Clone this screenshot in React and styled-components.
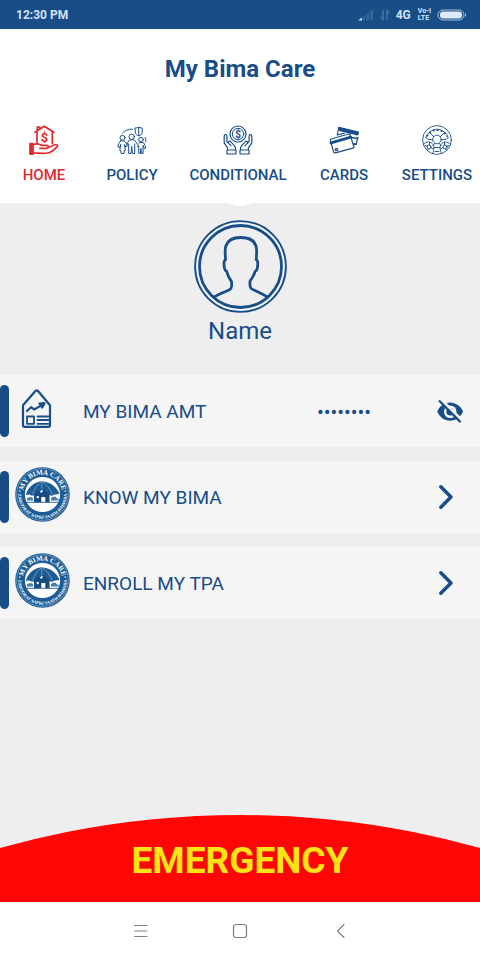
import React from 'react'
import styled, { createGlobalStyle } from 'styled-components'

const blue = '#184d88'

const GlobalStyle = createGlobalStyle`
    * { box-sizing: border-box; }
    body {
        margin: 0;
        background: #eeeeee;
        color: ${blue};
        font-family: Roboto, sans-serif;
    }
    button {
        margin: 0;
        padding: 0;
        border: 0;
        background: none;
        color: inherit;
        font: inherit;
        cursor: pointer;
    }
    svg { display: block; flex: none; }
`
const Screen = styled.div`
    display: flex;
    flex-direction: column;
    min-height: 100vh;
`
const StatusBar = styled.div`
    display: flex;
    align-items: center;
    height: 29px;
    padding: 0 13px 0 16px;
    background: ${blue};
    color: #d3e3f8;
    font-size: 12px;
    font-weight: 700;
`
const StatusIcons = styled.div`
    display: flex;
    align-items: center;
    gap: 6px;
    margin-left: auto;
`
const Volte = styled.span`
    display: flex;
    flex-direction: column;
    margin-left: 1px;
    font-size: 7px;
    line-height: 7px;
`
const Header = styled.header`
    background: #ffffff;
    overflow: hidden;
`
const Title = styled.h1`
    margin: 0;
    padding-top: 24px;
    font-size: 24px;
    line-height: 32px;
    font-weight: 700;
    text-align: center;
`
const Tabs = styled.nav`
    display: grid;
    grid-template-columns: 88fr 88fr 124fr 88fr 98fr;
    width: calc(100% + 6px);
    height: 118px;
    padding-top: 40px;
`
const Tab = styled.a`
    display: flex;
    flex-direction: column;
    align-items: center;
    gap: 10px;
    color: ${props => (props.$active ? '#e02a30' : blue)};
    font-size: 15px;
    line-height: 20px;
    font-weight: 500;
    text-decoration: none;
`
const Profile = styled.section`
    display: flex;
    flex-direction: column;
    align-items: center;
    padding-bottom: 26px;
    font-size: 24px;
    line-height: 36px;
`
const Notch = styled.svg`
    margin-bottom: 13px;
`
const List = styled.main`
    display: flex;
    flex-direction: column;
    flex: 1;
    gap: 14px;
    padding-bottom: 24px;
`
const Row = styled.div`
    display: flex;
    align-items: center;
    height: 72px;
    background: #f5f5f5;
    font-size: 19px;
    line-height: 24px;
`
const Marker = styled.span`
    width: 9px;
    height: 52px;
    border-radius: 5px;
    background: ${blue};
`
const RowIcon = styled.span`
    width: 74px;
    padding: 0 0 6px 6px;
`
const RowLabel = styled.span`
    flex: 1;
    padding-top: 2px;
`
const Amount = styled.span`
    padding-top: 2px;
    font-size: 20px;
`
const RowAction = styled.button`
    display: flex;
    justify-content: flex-end;
    width: 109px;
    padding-right: 16px;
`
const Emergency = styled.button`
    height: 87px;
    padding-top: 3px;
    background: #ff0606;
    color: #fbe416;
    font-size: 37px;
    font-weight: 700;
    clip-path: ellipse(185% 889px at 50% 889px);
`
const SystemNav = styled.div`
    display: flex;
    justify-content: center;
    align-items: center;
    gap: 80px;
    height: 58px;
    background: #ffffff;
    color: #808080;
`
const BottomArea = styled.footer`
    display: flex;
    flex-direction: column;
`

const Line = ({ width = 30, height = 30, stroke = 1, children }) => (
    <svg
        width={width}
        height={height}
        viewBox={`0 0 ${width} ${height}`}
        fill="none"
        stroke="currentColor"
        strokeWidth={stroke}
        strokeLinecap="round"
        strokeLinejoin="round"
        aria-hidden="true"
    >
        {children}
    </svg>
)

const HomeIcon = () => (
    <Line stroke={1.7}>
        <path d="M6 7.2 15.3 1.3l9.5 5.9M8.3 5V2h2.4v1.6M8 7v10.5M23.3 7v11.5" />
        <text x="15.4" y="17" textAnchor="middle" fontSize="13" fontWeight="700" fill="currentColor" stroke="none">$</text>
        <path d="M1 18.5h3v10.6H1z" fill="currentColor" />
        <path d="M4.8 19.6c4-1.8 5.6-.2 8 .7h4.6c2.6 0 2.6 3 0 3H11M18.8 22.6c3.4-.4 5.8-3.3 8.4-3.1 1.5.2 1.8 1.4.8 2.4-2.6 2.8-5 5.4-9 6.1-4.8.8-9.4 0-14.2 0" />
    </Line>
)

const FamilyIcon = () => (
    <Line stroke={1}>
        <circle cx="5.5" cy="12.8" r="2.5" />
        <circle cx="14.7" cy="11.8" r="2.7" />
        <circle cx="24" cy="14.6" r="2.3" />
        <path d="M18.3 3c1.5 0 2.3-.3 3.4-.9 1 .6 2 .9 3.5.9v4.5c0 1.6-1.5 2.7-3.5 3.4-2-.7-3.4-1.8-3.4-3.4zM21.7 2.5v8" />
        <path d="M5.5 8C8 5.4 11 4.1 15.5 4.1M28.2 12.3c.8 1.6.8 3 .4 4.6" />
        <path d="M3.5 16.1c-1.6.7-2.2 3.6-2.6 5.8l1.8.7 1-3.2-.9 6.3h1l.3 2.7h2.9l.4-2.7h1l-1-6.2 1.4 2.5 1.9-1.4-2.5-4c-1.3-1-3.2-1-4.7-.5z" />
        <path d="m9.8 19.8 1.9-4.3c1.4-1.1 4.7-1.1 6.2 0l3 4.3M11.7 19v9.4h2.4l.6-7 .6 7h2.4V19" />
        <path d="M21.8 18c1.1-.8 3.7-.8 5 0 1 1.6 1.6 3.2 2.1 5l-1.6.6-1.2-3.2v8h-1.7l-.5-5-.5 5h-1.7v-8l-1.3 1.2" />
    </Line>
)

const HandsCoinIcon = () => (
    <Line stroke={1.2}>
        <circle cx="15" cy="9" r="8" />
        <circle cx="15" cy="9" r="5.7" strokeWidth="1" />
        <text x="15" y="12.6" textAnchor="middle" fontSize="10" fontWeight="700" fill="currentColor" stroke="none">$</text>
        <path d="M4.6 25v-2.2l-3.4-5V11c0-1.9 2.7-1.9 2.7 0v5.6l4 4.1M5.6 18.4c-1-1.5.8-2.9 2-1.7l4 4.2c1 1.2 1 2.5 1 4.1M4 25h9v4H4z" />
        <path d="M25.4 25v-2.2l3.4-5V11c0-1.9-2.7-1.9-2.7 0v5.6l-4 4.1M24.4 18.4c1-1.5-.8-2.9-2-1.7l-4 4.2c-1 1.2-1 2.5-1 4.1M17 25h9v4h-9z" />
    </Line>
)

const CardsIcon = () => (
    <Line stroke={1.2}>
        <path d="m9.7 2.3 19.7 4.8-.6 2.8L9.3 5.2z" fill="currentColor" />
        <path d="M9 6.5 8.2 10M28.9 12.5 27 19.7l-1.8-.4M8.6 10l6.6-1.8" />
        <path d="m22.8 12.8 5.6.5M24.5 18.8l2.5.5" strokeWidth="1.6" />
        <path d="m2.3 14 17.2-5q1.2-.3 1.6.9l3.8 11.9q.3 1-1 1.3L6.2 27.8q-1.3.3-1.6-.9L1.3 15.6Q1 14.4 2.3 14z" fill="#ffffff" />
        <path d="m2 17.8 19.8-5.6" strokeWidth="2.8" />
        <path d="m6.2 24 2-.6.6 1.8-2 .6z" />
    </Line>
)

const WheelIcon = () => (
    <Line stroke={0.9}>
        <circle cx="15" cy="15" r="14.4" />
        <circle cx="15" cy="14.5" r="4.3" />
        <path d="M5 11.5a11 11 0 0 1 20 0" strokeWidth="1.6" strokeDasharray="2 2" strokeLinecap="butt" />
        <path d="M3.8 12.5a11.7 11.7 0 0 1 22.4 0M7.5 7.4l4.2 4.3M22.5 7.4l-4.2 4.3M3.8 12.5l1.8 1.6 5.2.8M26.2 12.5l-1.8 1.6-5.2.8M13 18.3l-2 2.2M17 18.3l2 2.2" />
        <path d="M1.8 19.2c2.4-3 7.2-3 9.3.4 1.4 2.6 1 6-.6 8.8M28.2 19.2c-2.4-3-7.2-3-9.3.4-1.4 2.6-1 6 .6 8.8" />
        <circle cx="7" cy="22" r="2" />
        <circle cx="23" cy="22" r="2" />
        <path d="m2.8 20.5 2.3.7M5.5 25.5l.7-1.7M9 22.6l2.3 1.4M7.5 20v-2.5M27.2 20.5l-2.3.7M24.5 25.5l-.7-1.7M21 22.6 18.7 24M22.5 20v-2.5M13 26.5h4M12.5 22.5h5" />
    </Line>
)

const Avatar = () => (
    <Line width={93} height={93} stroke={2.8}>
        <circle cx="46.5" cy="46.5" r="45.4" fill="#f2f6fa" strokeWidth="1.9" />
        <circle cx="46.5" cy="46.5" r="41" fill="#eeeeee" />
        <path d="M20 77.2c5-3.5 11-5 16.3-8 1.4-1 1.4-5.6 1.2-7.6-2.2-3-4-7-4.9-10.3-1.6-.6-2.6-4.6-2.6-8.3 0-1.8.4-2.8 1.6-3.4-.4-4.6-1-9.5.2-13.6C33.8 20 39.6 17.5 46.8 17.5S60.2 20 62 26c1.2 4.1.6 9 .2 13.6 1.2.6 1.6 1.6 1.6 3.4 0 3.7-1 7.7-2.6 8.3-1 3.3-2.9 6.7-5.1 9.7-.2 2-.2 6.6 1.2 7.6 5.2 3 11.2 5.1 16.4 8.6" />
    </Line>
)

const ReportIcon = () => (
    <Line width={43} height={39} stroke={2.2}>
        <path d="M8 16.2 20.4 2q1.3-1.3 2.6 0L35 16.2V36q0 1.8-1.8 1.8H9.8Q8 37.8 8 36z" />
        <path d="m12 22 4-3.8 3.2 2.3 7.5-4.4M24.5 14.5l5-.3-2.3 4.3z" />
        <path d="M12 27.5h7v7.3h-7zM22.5 27.5h11M22.5 31h11M22.5 34.8h11" strokeWidth="1.8" />
    </Line>
)

const BimaLogo = ({ id }) => (
    <svg width="55" height="55" viewBox="0 0 55 55" aria-hidden="true">
        <defs>
            <path id={`${id}-top`} d="M7.7 27.5a19.8 19.8 0 0 1 39.6 0" />
            <path id={`${id}-bottom`} d="M3.7 22.5a24.3 24.3 0 1 0 47.6 0" />
        </defs>
        <circle cx="27.5" cy="27.5" r="27.3" fill="#1d5c95" />
        <circle cx="27.5" cy="27.5" r="25.9" fill="none" stroke="#a9c7df" strokeWidth=".5" />
        <circle cx="27.5" cy="27.5" r="17.6" fill="#ffffff" />
        <g fill="#ffffff" fontFamily="Liberation Serif, serif" fontWeight="700" textAnchor="middle">
            <text fontSize="7">
                <textPath href={`#${id}-top`} startOffset="50%">MY BIMA CARE</textPath>
            </text>
            <text fontSize="4.4">
                <textPath href={`#${id}-bottom`} startOffset="50%">ZAROORAT AAPKI SAATH HAMARA</textPath>
            </text>
        </g>
        <g fill="#ffffff">
            <circle cx="4.8" cy="24" r=".8" />
            <circle cx="50.2" cy="24" r=".8" />
        </g>
        <path d="M10.8 28c1.5-7 8-13 15.7-13.7 8.3.5 15.500 5.500 18 12.700l-4.500.5-3 1.200-3.500-.7-6.500-5-6.500 5-3.500.7-2.500-1.200z" fill="#1d5c95" />
        <path d="M26.5 14.5c-4 3-7.5 8-9 13M27 14.5c4 2.5 8.5 7.5 10.5 13M26.8 14.5v8" fill="none" stroke="#9dbfda" strokeWidth=".6" />
        <path d="m19 28 4.3-4.500 3 2.500 2.700-3.500 5.500 5.500v7.200h-4.200V30h-4v5.200H19z" fill="#174b82" />
        <path d="M21.7 29h2v2.2h-2z" fill="#ffffff" />
        <path d="M10.5 35.3h34" stroke="#1d5c95" strokeWidth=".9" />
        <path d="M36 33.5v-2l1.5-1.700h3.300l1.300 1.700 1.700.5v1.500zM12 33.500v-2.200l2-1h3l1 1.200v2z" fill="#487ca9" />
    </svg>
)

const EyeOffIcon = () => (
    <svg width="28" height="28" viewBox="0 0 28 28" fill="none" aria-hidden="true">
        <path d="M1.3 14.5C3.5 9 8.3 5.5 14 5.500s10.700 3.500 13 9c-2.300 5.600-7.200 9.200-13 9.200s-10.500-3.600-12.700-9.200z" fill={blue} />
        <circle cx="14.2" cy="14.7" r="6.3" fill="#f5f5f5" />
        <circle cx="14.2" cy="14.7" r="3.8" fill={blue} />
        <path d="m4.6 2 21.5 21.5" stroke="#f5f5f5" strokeWidth="3" />
        <path d="m3 3.5 21.5 21.6" stroke={blue} strokeWidth="2.2" />
    </svg>
)

const ChevronIcon = () => (
    <Line width={28} height={28} stroke={3.5}>
        <path d="M4.8 3.8 15 14 4.8 24.2" />
    </Line>
)

const tabs = [
    { label: 'HOME', Icon: HomeIcon, active: true },
    { label: 'POLICY', Icon: FamilyIcon },
    { label: 'CONDITIONAL', Icon: HandsCoinIcon },
    { label: 'CARDS', Icon: CardsIcon },
    { label: 'SETTINGS', Icon: WheelIcon }
]

const App = () => (
    <Screen>
        <GlobalStyle />
        <StatusBar>
            <span>12:30 PM</span>
            <StatusIcons>
                <svg width="16" height="12" viewBox="0 0 16 12" aria-hidden="true">
                    <path d="M0 11.5 4 8.5v3z" fill="#d3e3f8" />
                    <path d="M5 7.8 7.3 6v5.500H5zM8.500 5 11 3.200v8.300H8.500zM12.200 2.300 15 .2v11.300h-2.800z" fill="#356597" />
                </svg>
                <svg width="10" height="12" viewBox="0 0 10 12" fill="none" stroke="#4d79a8" aria-hidden="true">
                    <path d="M3 1v9.5L.7 8M7 11V1.5L9.3 4" strokeWidth="1.3" />
                </svg>
                <span>4G</span>
                <Volte>
                    <span>Vo-I</span>
                    <span>LTE</span>
                </Volte>
                <svg width="30" height="12" viewBox="0 0 30 12" aria-hidden="true">
                    <rect x="1" y="1" width="26" height="10" rx="5" fill="none" stroke="#a9c1de" />
                    <rect x="3" y="2.5" width="22" height="7" rx="3" fill="#dfeafa" />
                    <path d="M28 4q2 2 0 4z" fill="#a9c1de" />
                </svg>
            </StatusIcons>
        </StatusBar>
        <Header>
            <Title>My Bima Care</Title>
            <Tabs>
                {tabs.map(({ label, Icon, active }) => (
                    <Tab key={label} href={`#${label.toLowerCase()}`} $active={active}>
                        <Icon />
                        {label}
                    </Tab>
                ))}
            </Tabs>
        </Header>
        <Profile>
            <Notch width="28" height="4" viewBox="0 0 28 4" aria-hidden="true">
                <path d="M0 0c5 0 7 3 14 3s9-3 14-3z" fill="#ffffff" />
            </Notch>
            <Avatar />
            Name
        </Profile>
        <List>
            <Row>
                <Marker />
                <RowIcon><ReportIcon /></RowIcon>
                <RowLabel>MY BIMA AMT</RowLabel>
                <Amount>••••••••</Amount>
                <RowAction aria-label="Show amount"><EyeOffIcon /></RowAction>
            </Row>
            <Row>
                <Marker />
                <RowIcon><BimaLogo id="know" /></RowIcon>
                <RowLabel>KNOW MY BIMA</RowLabel>
                <RowAction aria-label="Open Know My Bima"><ChevronIcon /></RowAction>
            </Row>
            <Row>
                <Marker />
                <RowIcon><BimaLogo id="enroll" /></RowIcon>
                <RowLabel>ENROLL MY TPA</RowLabel>
                <RowAction aria-label="Open Enroll My TPA"><ChevronIcon /></RowAction>
            </Row>
        </List>
        <BottomArea>
            <Emergency>EMERGENCY</Emergency>
            <SystemNav>
                <button aria-label="Menu">
                    <Line width={20} height={20}>
                        <path d="M4.5 4.5H17M4.5 10H17M4.5 15.5H17" />
                    </Line>
                </button>
                <button aria-label="Home">
                    <Line width={20} height={20} stroke={1.2}>
                        <rect x="3.5" y="3.5" width="13" height="13" rx="2.5" />
                    </Line>
                </button>
                <button aria-label="Back">
                    <Line width={20} height={20} stroke={1.2}>
                        <path d="M14 3.5 7.5 10l6.500 6.500" />
                    </Line>
                </button>
            </SystemNav>
        </BottomArea>
    </Screen>
)

export default App
